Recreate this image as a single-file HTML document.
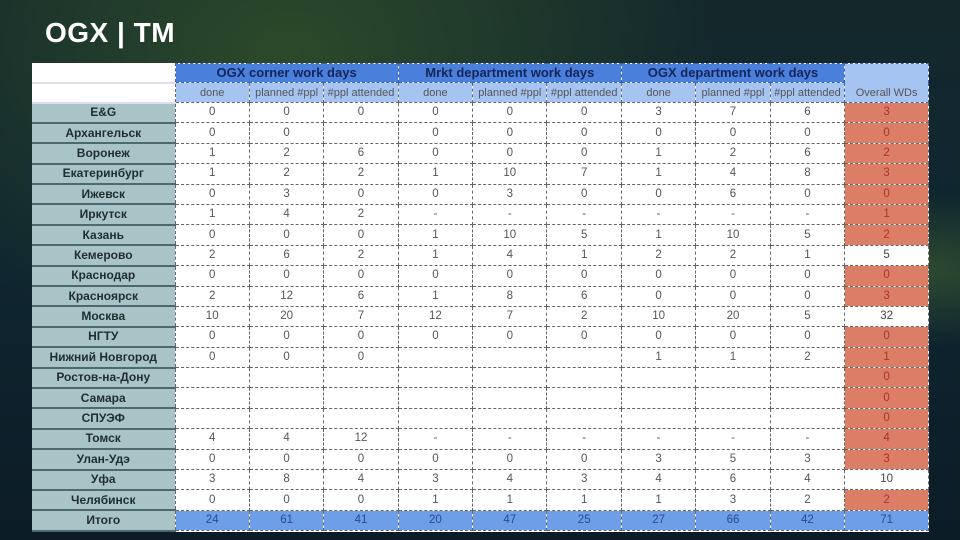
<!DOCTYPE html>
<html><head><meta charset="utf-8"><style>
html,body{margin:0;padding:0}
body{width:960px;height:540px;overflow:hidden;position:relative;font-family:"Liberation Sans",sans-serif;
background:radial-gradient(ellipse at 30% 10%,#2c4a2a 0%,transparent 45%),radial-gradient(ellipse at 95% 50%,#2e4a30 0%,transparent 20%),linear-gradient(180deg,#14282c 0%,#0f2530 50%,#0c1c26 100%);}
h1{position:absolute;left:45px;top:17px;margin:0;color:#fff;font-size:28px;font-weight:bold;letter-spacing:0.5px}
table{position:absolute;left:32px;top:63px;width:897px;border-collapse:collapse;table-layout:fixed;background:#fff;font-size:11.5px;color:#555}
td{padding:0;text-align:center;border:1px dashed #666;overflow:hidden;white-space:nowrap;height:18.4px;line-height:17px}
td.n{background:#a8c4c7;color:#1f2d30;font-weight:bold;font-size:12px;border:none;border-bottom:2px solid #4c6a6e;border-right:1px dashed #666}
td.r{background:#dc7d66;color:#a33}
td.w{background:#fff;color:#444}
tr.h1 td{background:#4a80dc;color:#13255a;font-weight:bold;font-size:13px;height:18px;line-height:18px;border-color:#3360b0}
tr.h2 td{background:#a6c4f2;color:#555;font-size:11px;height:18px;line-height:18px}
tr.h1 td.blank,tr.h2 td.blank{background:#fff;border:none;border-bottom:2px solid #dde}
td.ov{background:#a6c4f2!important;color:#555!important;font-weight:normal!important;font-size:11px!important;vertical-align:bottom}
tr.t td{background:#6e9ee8;color:#2a4a8a}
tr.t td.n{background:#a8c4c7;color:#1f2d30}
</style></head><body>
<h1>OGX | TM</h1>
<table>
<colgroup><col style="width:143px"><col span="9" style="width:74.4px"><col style="width:84px"></colgroup>
<tr class="h1"><td class="blank"></td><td colspan="3">OGX corner work days</td><td colspan="3">Mrkt department work days</td><td colspan="3">OGX department work days</td><td class="ov" rowspan="2">Overall WDs</td></tr>
<tr class="h2"><td class="blank"></td><td>done</td><td>planned #ppl</td><td>#ppl attended</td><td>done</td><td>planned #ppl</td><td>#ppl attended</td><td>done</td><td>planned #ppl</td><td>#ppl attended</td></tr>
<tr><td class="n">E&amp;G</td><td>0</td><td>0</td><td>0</td><td>0</td><td>0</td><td>0</td><td>3</td><td>7</td><td>6</td><td class="r">3</td></tr>
<tr><td class="n">Архангельск</td><td>0</td><td>0</td><td></td><td>0</td><td>0</td><td>0</td><td>0</td><td>0</td><td>0</td><td class="r">0</td></tr>
<tr><td class="n">Воронеж</td><td>1</td><td>2</td><td>6</td><td>0</td><td>0</td><td>0</td><td>1</td><td>2</td><td>6</td><td class="r">2</td></tr>
<tr><td class="n">Екатеринбург</td><td>1</td><td>2</td><td>2</td><td>1</td><td>10</td><td>7</td><td>1</td><td>4</td><td>8</td><td class="r">3</td></tr>
<tr><td class="n">Ижевск</td><td>0</td><td>3</td><td>0</td><td>0</td><td>3</td><td>0</td><td>0</td><td>6</td><td>0</td><td class="r">0</td></tr>
<tr><td class="n">Иркутск</td><td>1</td><td>4</td><td>2</td><td>-</td><td>-</td><td>-</td><td>-</td><td>-</td><td>-</td><td class="r">1</td></tr>
<tr><td class="n">Казань</td><td>0</td><td>0</td><td>0</td><td>1</td><td>10</td><td>5</td><td>1</td><td>10</td><td>5</td><td class="r">2</td></tr>
<tr><td class="n">Кемерово</td><td>2</td><td>6</td><td>2</td><td>1</td><td>4</td><td>1</td><td>2</td><td>2</td><td>1</td><td class="w">5</td></tr>
<tr><td class="n">Краснодар</td><td>0</td><td>0</td><td>0</td><td>0</td><td>0</td><td>0</td><td>0</td><td>0</td><td>0</td><td class="r">0</td></tr>
<tr><td class="n">Красноярск</td><td>2</td><td>12</td><td>6</td><td>1</td><td>8</td><td>6</td><td>0</td><td>0</td><td>0</td><td class="r">3</td></tr>
<tr><td class="n">Москва</td><td>10</td><td>20</td><td>7</td><td>12</td><td>7</td><td>2</td><td>10</td><td>20</td><td>5</td><td class="w">32</td></tr>
<tr><td class="n">НГТУ</td><td>0</td><td>0</td><td>0</td><td>0</td><td>0</td><td>0</td><td>0</td><td>0</td><td>0</td><td class="r">0</td></tr>
<tr><td class="n">Нижний Новгород</td><td>0</td><td>0</td><td>0</td><td></td><td></td><td></td><td>1</td><td>1</td><td>2</td><td class="r">1</td></tr>
<tr><td class="n">Ростов-на-Дону</td><td></td><td></td><td></td><td></td><td></td><td></td><td></td><td></td><td></td><td class="r">0</td></tr>
<tr><td class="n">Самара</td><td></td><td></td><td></td><td></td><td></td><td></td><td></td><td></td><td></td><td class="r">0</td></tr>
<tr><td class="n">СПУЭФ</td><td></td><td></td><td></td><td></td><td></td><td></td><td></td><td></td><td></td><td class="r">0</td></tr>
<tr><td class="n">Томск</td><td>4</td><td>4</td><td>12</td><td>-</td><td>-</td><td>-</td><td>-</td><td>-</td><td>-</td><td class="r">4</td></tr>
<tr><td class="n">Улан-Удэ</td><td>0</td><td>0</td><td>0</td><td>0</td><td>0</td><td>0</td><td>3</td><td>5</td><td>3</td><td class="r">3</td></tr>
<tr><td class="n">Уфа</td><td>3</td><td>8</td><td>4</td><td>3</td><td>4</td><td>3</td><td>4</td><td>6</td><td>4</td><td class="w">10</td></tr>
<tr><td class="n">Челябинск</td><td>0</td><td>0</td><td>0</td><td>1</td><td>1</td><td>1</td><td>1</td><td>3</td><td>2</td><td class="r">2</td></tr>
<tr class="t"><td class="n">Итого</td><td>24</td><td>61</td><td>41</td><td>20</td><td>47</td><td>25</td><td>27</td><td>66</td><td>42</td><td>71</td></tr>
</table>
</body></html>
